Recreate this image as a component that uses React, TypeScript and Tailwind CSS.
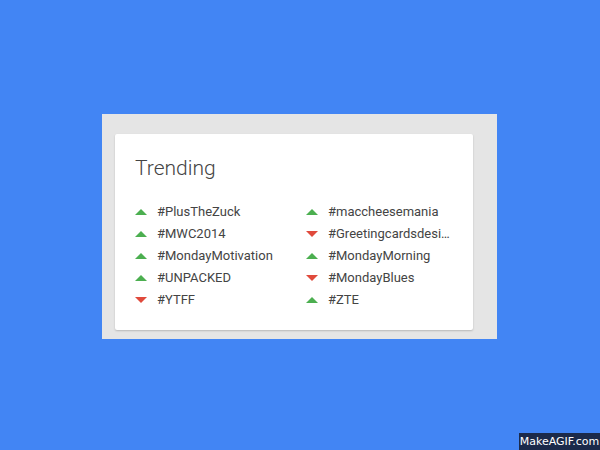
const left = [
  { tag: "#PlusTheZuck", up: true },
  { tag: "#MWC2014", up: true },
  { tag: "#MondayMotivation", up: true },
  { tag: "#UNPACKED", up: true },
  { tag: "#YTFF", up: false },
];

const right = [
  { tag: "#maccheesemania", up: true },
  { tag: "#Greetingcardsdesi…", up: false },
  { tag: "#MondayMorning", up: true },
  { tag: "#MondayBlues", up: false },
  { tag: "#ZTE", up: true },
];

function Arrow({ up }: { up: boolean }) {
  return up ? (
    <span className="w-0 h-0 border-l-[6px] border-r-[6px] border-b-[6px] border-l-transparent border-r-transparent border-b-[#4caf50]" />
  ) : (
    <span className="w-0 h-0 border-l-[6px] border-r-[6px] border-t-[6px] border-l-transparent border-r-transparent border-t-[#e04a3c]" />
  );
}

function Column({ items }: { items: { tag: string; up: boolean }[] }) {
  return (
    <ul className="flex flex-col">
      {items.map((item) => (
        <li key={item.tag} className="flex items-center gap-[10px] h-[22px]">
          <Arrow up={item.up} />
          <span className="text-[13px] text-[#444]">{item.tag}</span>
        </li>
      ))}
    </ul>
  );
}

export default function App() {
  return (
    <div className="relative w-[600px] h-[450px] overflow-hidden bg-[#4285f4] pt-[114px] pl-[102px] font-['Roboto',sans-serif]">
      {/* gray panel */}
      <div className="w-[395px] h-[225px] bg-[#e5e5e5] pt-[20px] pl-[13px]">
        {/* card */}
        <div className="w-[358px] h-[196px] bg-white rounded-[2px] shadow-[0_1px_2px_rgba(0,0,0,0.2)] pt-[20px] pl-[21px]">
          <h2 className="text-[21px] font-light text-[#444] leading-[28px] -ml-[1px]">Trending</h2>
          <div className="mt-[19px] grid grid-cols-[171px_1fr] -ml-[1px]">
            <Column items={left} />
            <Column items={right} />
          </div>
        </div>
      </div>

      <div className="absolute right-0 bottom-0 w-[81px] h-[17px] bg-[#1b2a4a] flex items-center justify-center">
        <span className="text-[11px] text-white font-['DejaVu_Sans',sans-serif] leading-none">MakeAGIF.com</span>
      </div>
    </div>
  );
}
